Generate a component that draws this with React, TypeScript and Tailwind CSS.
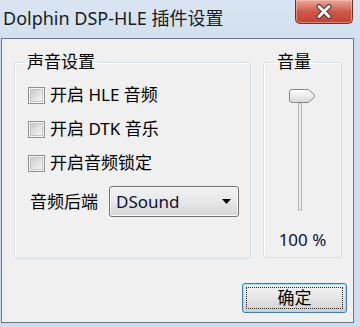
import { useState } from 'react';

function CheckBox({ label }: { label: React.ReactNode }) {
  return (
    <div className="flex items-center h-[24px] gap-[5px]">
      <div className="w-[17px] h-[17px] border border-[#8e8f8f] bg-[#f4f4f4] flex items-center justify-center">
        <div className="w-[13px] h-[13px] border border-[#c6c6c6] bg-gradient-to-br from-[#cbcbcb] to-[#f6f6f6]" />
      </div>
      <span>{label}</span>
    </div>
  );
}

function VolumeSlider() {
  return (
    <svg width="28" height="122" viewBox="0 0 28 122">
      <defs>
        <linearGradient id="thumb" x1="0" y1="0" x2="0" y2="1">
          <stop offset="0" stopColor="#ffffff" />
          <stop offset="0.5" stopColor="#ececec" />
          <stop offset="1" stopColor="#d4d4d4" />
        </linearGradient>
      </defs>
      <rect x="9.5" y="14" width="3" height="107" fill="#ececec" stroke="#b4b4b4" strokeWidth="1" />
      <path
        d="M3 0.5 H19.5 L25.5 6 V8 L19.5 13.5 H3 Q0.5 13.5 0.5 11 V3 Q0.5 0.5 3 0.5 Z"
        fill="url(#thumb)"
        stroke="#878787"
        strokeWidth="1"
      />
    </svg>
  );
}

export default function App() {
  const [hle, setHle] = useState(false);
  void hle;
  void setHle;

  return (
    <div className="w-[360px] h-[327px] bg-[#cddcee] flex flex-col overflow-hidden font-[family-name:'Noto_Sans','Noto_Sans_CJK_SC',sans-serif] text-black">
      {/* Title bar */}
      <div className="h-[38px] flex items-start bg-gradient-to-b from-[#d9e5f2] to-[#d2e0ef]">
        <div className="pl-[3px] h-[36px] flex items-center text-[18px] text-[#1b1b1b]">
          Dolphin DSP-HLE 插件设置
        </div>
        <div className="ml-auto mr-[7px] w-[58px] h-[24px] rounded-b-[5px] border border-t-0 border-[#7d2c22] bg-gradient-to-b from-[#e9a99a] via-[#cf5a4a] to-[#c2402f] shadow-[inset_0_0_0_1px_rgba(255,200,190,0.5)] flex items-center justify-center">
          <svg width="16" height="15" viewBox="0 0 16 15">
            <path d="M3 2.5 L13 12.5 M13 2.5 L3 12.5" stroke="#4b3130" strokeWidth="5" strokeLinecap="round" />
            <path d="M3 2.5 L13 12.5 M13 2.5 L3 12.5" stroke="#f4f4f4" strokeWidth="3" strokeLinecap="round" />
          </svg>
        </div>
      </div>

      {/* Client area */}
      <div className="ml-[1px] w-[353px] h-[285px] border border-[#6c7886] bg-[#f0f0f0] flex flex-col text-[17px]">
        <div className="flex pt-[11px] pl-[12px] gap-[12px]">
          <fieldset className="w-[237px] h-[209px] border border-[#d5dfe5] rounded-[3px] shadow-[inset_1px_1px_0_#ffffff]">
            <legend className="ml-[9px] px-[3px] leading-[24px] text-[17px]">声音设置</legend>
            <div className="flex flex-col pl-[13px] pt-[9px] gap-[10px]">
              <CheckBox label="开启 HLE 音频" />
              <CheckBox label="开启 DTK 音乐" />
              <CheckBox label="开启音频锁定" />
            </div>
            <div className="flex items-center mt-[11px] pl-[15px] gap-[11px]">
              <span>音频后端</span>
              <div className="w-[130px] h-[31px] border border-[#707070] rounded-[3px] bg-gradient-to-b from-[#f2f2f2] via-[#e8e8e8] to-[#d4d4d4] shadow-[inset_0_0_0_1px_#fafafa] flex items-center pl-[6px] pr-[7px]">
                <span className="text-[#101030]">DSound</span>
                <svg className="ml-auto" width="9" height="5" viewBox="0 0 9 5">
                  <path d="M0 0 H9 L4.5 5 Z" fill="#000" />
                </svg>
              </div>
            </div>
          </fieldset>

          <fieldset className="w-[79px] h-[208px] border border-[#d5dfe5] rounded-[3px] shadow-[inset_1px_1px_0_#ffffff]">
            <legend className="ml-[10px] px-[3px] leading-[24px] text-[17px]">音量</legend>
            <div className="flex flex-col">
              <div className="ml-[25px] mt-[15px]">
                <VolumeSlider />
              </div>
              <div className="mt-[17px] text-center leading-[24px] text-[#101030]">100 %</div>
            </div>
          </fieldset>
        </div>

        <div className="flex justify-end pr-[6px] mt-[24px]">
          <div className="w-[105px] h-[30px] rounded-[3px] border border-[#3c7fb1] bg-gradient-to-b from-[#f4f4f4] via-[#e6e6e6] to-[#cfcfcf] shadow-[inset_0_0_0_1px_#9fdcf7] p-[3px]">
            <div className="w-full h-full border border-dotted border-[#222] flex items-center justify-center text-[17px]">
              确定
            </div>
          </div>
        </div>
      </div>
    </div>
  );
}
